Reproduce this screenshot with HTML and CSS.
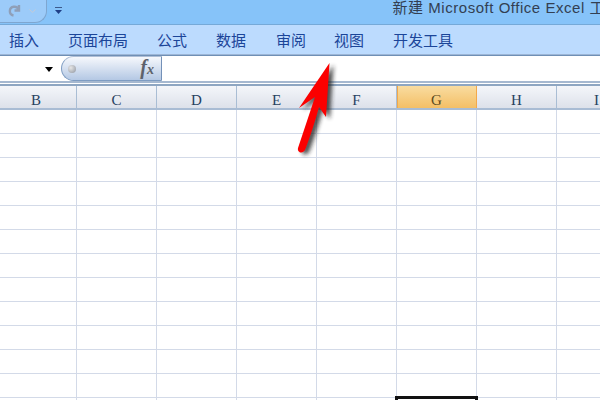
FILE: index.html
```html
<!DOCTYPE html>
<html lang="zh">
<head>
<meta charset="utf-8">
<title>Excel</title>
<link rel="stylesheet" href="styles.css">
</head>
<body>
<div class="app">
  <header class="titlebar">
    <div class="qat">
      <svg class="redo" width="13" height="13" viewBox="0 0 13 13"><path d="M11 1v5.5H6.5M10.5 6A4.4 4.4 0 1 0 5.5 11.5" fill="none" stroke="#8f9fb8" stroke-width="2.4"/></svg>
      <svg class="qat-drop" width="7" height="4" viewBox="0 0 7 4"><path d="M0.5 0.5 3.5 3.5 6.5 0.5" fill="none" stroke="#c3cad6" stroke-width="1"/></svg>
    </div>
    <svg class="custom" width="7" height="8" viewBox="0 0 7 8"><path d="M0 0h7v1H0z" fill="#3c5a8c"/><path d="M0 3h7L3.5 7z" fill="#1f3f86"/></svg>
    <div class="title">新建 Microsoft Office Excel 工</div>
  </header>
  <nav class="tabs">
    <span class="tab t1">插入</span>
    <span class="tab t2">页面布局</span>
    <span class="tab t3">公式</span>
    <span class="tab t4">数据</span>
    <span class="tab t5">审阅</span>
    <span class="tab t6">视图</span>
    <span class="tab t7">开发工具</span>
  </nav>
  <div class="formula">
    <div class="namebox"><span class="caret"></span></div>
    <div class="fxbox"><span class="dot"></span><span class="fx">f<small>x</small></span></div>
    <div class="input"></div>
  </div>
  <div class="headers">
    <div class="hd first">B</div>
    <div class="hd">C</div>
    <div class="hd">D</div>
    <div class="hd">E</div>
    <div class="hd">F</div>
    <div class="hd active">G</div>
    <div class="hd">H</div>
    <div class="hd">I</div>
  </div>
  <div class="sheet"><div class="selected"></div></div>
  <svg class="arrow" width="60" height="120" viewBox="0 0 60 120">
    <defs><filter id="sh" x="-40%" y="-20%" width="180%" height="140%"><feGaussianBlur stdDeviation="2"/></filter></defs>
    <path d="M48.5 13 45 67 38 57 C34 72 28 90 24 100 C22 104 16 103 17 98 L34 47 18 58Z" transform="translate(4 2)" fill="#222" opacity=".8" filter="url(#sh)"/>
    <path d="M48.5 13 45 67 38 57 C34 72 28 90 24 100 C22 104 16 103 17 98 L34 47 18 58Z" fill="#fb0000"/>
  </svg>
</div>
</body>
</html>
```
FILE: styles.css
```css
* { box-sizing: border-box; }
html, body { margin: 0; padding: 0; background: #fff; }
.app { position: relative; width: 600px; height: 400px; overflow: hidden; display: flex; flex-direction: column; font-family: "Noto Sans CJK SC", sans-serif; }
.titlebar { height: 25px; flex: none; background: #86c3f9; border-bottom: 1px solid #75a9d8; display: flex; align-items: center; position: relative; }
.qat { width: 47px; height: 23px; margin-top: -2px; border: 1px solid #7ea6d0; border-left: 0; border-top: 0; border-radius: 0 0 12px 0 / 0 0 12px 0; background: #9ccbf9; display: flex; align-items: center; padding-left: 8px; gap: 8px; flex: none; }
.custom { margin-left: 8px; flex: none; margin-top: -2px; }
.title { margin-left: auto; white-space: nowrap; font-family: "Liberation Sans", "Noto Sans CJK SC", sans-serif; font-size: 15px; color: #333f52; margin-right: -5px; letter-spacing: .53px; line-height: 20px; margin-top: -8px; }
.tabs { height: 30px; flex: none; background: #bcdbfe; border-bottom: 1px solid #9db6d6; display: flex; align-items: center; color: #1b4599; font-size: 15px; }
.tab { white-space: nowrap; line-height: 20px; }
.t1 { margin-left: 9px; }
.t2 { margin-left: 29px; }
.t3 { margin-left: 29px; }
.t4 { margin-left: 29px; }
.t5 { margin-left: 30px; }
.t6 { margin-left: 28px; }
.t7 { margin-left: 29px; }
.formula { height: 28px; flex: none; display: flex; background: #fff; border-top: 1px solid #6f8fb5; border-bottom: 2px solid #a5b8d0; }
.namebox { width: 61px; flex: none; position: relative; }
.caret { position: absolute; left: 45px; top: 11px; width: 0; height: 0; border-left: 4.5px solid transparent; border-right: 4.5px solid transparent; border-top: 5px solid #000; }
.fxbox { width: 101px; flex: none; border: 1px solid #7e9cc2; border-right-color: #7491b8; border-radius: 13px 0 0 13px; border-top: 1px solid #aebed6; background: linear-gradient(#f6f8fc, #b4c8e4); display: flex; align-items: center; justify-content: space-between; padding: 0 7px 0 6px; }
.dot { width: 8px; height: 8px; border-radius: 50%; background: radial-gradient(circle at 35% 35%, #e6e6e6, #8f959f); }
.fx { font-family: "Liberation Serif", serif; font-style: italic; font-weight: bold; font-size: 20px; color: #5d626c; line-height: 1; margin-top: -3px; }
.fx small { font-size: 14px; }
.input { flex: 1; }
.headers { margin-top: 1px; height: 26px; flex: none; display: flex; border-top: 2px solid #8ea6c2; border-bottom: 2px solid #a9bcd4; background: linear-gradient(#f4f6fa, #dde1ea); }
.hd { width: 80px; flex: none; text-align: center; padding-top: 3px; font-family: "Liberation Serif", serif; font-size: 15px; line-height: 22px; color: #27415f; border-right: 1px solid #a9bdd4; }
.hd.first { width: 77px; padding-right: 4px; }
.hd.active { background: linear-gradient(#f9dca0, #f4bf66); border-right-color: #f3a94a; color: #5c4a1e; box-shadow: inset 1px 0 0 #f3a94a; }
.sheet { flex: 1; position: relative; background-color: #fff; background-image: linear-gradient(to right, #d3dae8 1px, transparent 1px), linear-gradient(to bottom, #d3dae8 1px, transparent 1px); background-size: 80px 24px; background-position: -4px 23px; }
.selected { position: absolute; left: 395px; top: 286px; width: 83px; height: 14px; border: 3px solid #111; }
.arrow { position: absolute; left: 281px; top: 50px; }
```
